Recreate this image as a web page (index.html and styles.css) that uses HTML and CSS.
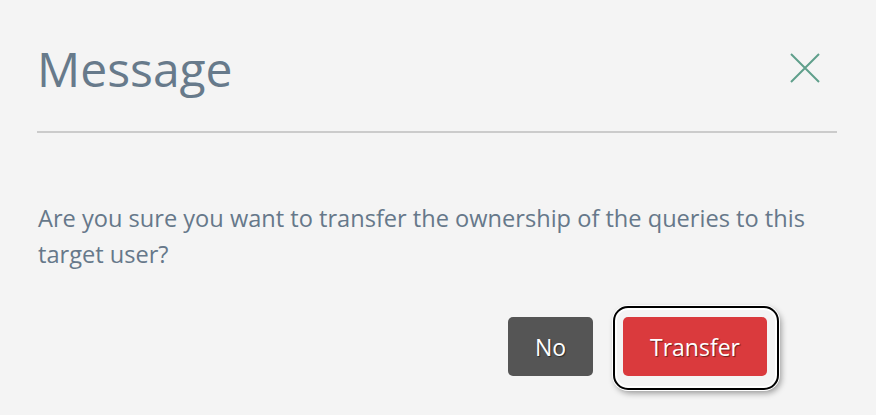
FILE: index.html
```html
<!DOCTYPE html>
<html>
<head>
  <title>Message</title>
  <link rel="stylesheet" href="styles.css">
</head>
<body>
  <div class="modal">
    <div class="modal-header">
      <h1 class="modal-title">Message</h1>
      <button class="close" aria-label="Close">
        <svg width="30" height="30" viewBox="0 0 30 30">
          <path d="M1 1 L29 29 M29 1 L1 29" stroke="#5f9f8b" stroke-width="2" fill="none"/>
        </svg>
      </button>
    </div>
    <div class="modal-body">
      <p>Are you sure you want to transfer the ownership of the queries to this target user?</p>
    </div>
    <div class="modal-footer">
      <button class="btn btn-no">No</button>
      <span class="focus-wrap">
        <button class="btn btn-transfer">Transfer</button>
      </span>
    </div>
  </div>
</body>
</html>
```

FILE: styles.css
```css
html, body {
  margin: 0;
  padding: 0;
  background-color: #f4f4f4;
  font-family: "Open Sans", "Liberation Sans", sans-serif;
}

body {
  min-height: 415px;
}

.modal {
  padding: 0 39px 38px 37px;
}

.modal-header {
  display: flex;
  align-items: center;
  justify-content: space-between;
  padding-top: 36px;
  padding-bottom: 30px;
  border-bottom: 2px solid #cbcbcb;
}

.modal-title {
  margin: 0;
  font-size: 48px;
  font-weight: 400;
  color: #677a8b;
  line-height: normal;
}

.close {
  background: none;
  border: none;
  padding: 0;
  margin-right: 17px;
  margin-top: -1px;
  width: 30px;
  height: 30px;
  cursor: pointer;
}

.close svg {
  display: block;
}

.modal-body {
  padding-top: 67px;
}

.modal-body p {
  margin: 0;
  font-size: 23.6px;
  line-height: 36px;
  color: #66788a;
  padding-left: 1px;
}

.modal-footer {
  display: flex;
  justify-content: flex-end;
  align-items: center;
  gap: 30px;
  padding-top: 45px;
  padding-right: 70px;
}

.focus-wrap {
  position: relative;
  display: block;
}

.focus-wrap::after {
  content: "";
  position: absolute;
  top: -11px;
  bottom: -14px;
  left: -10px;
  right: -12px;
  border: 2px solid #000;
  border-radius: 15px;
  box-shadow: 0 0 0 1px #fff, inset 0 0 0 2px #fff, 2px 3px 6px rgba(0, 0, 0, 0.4);
  pointer-events: none;
}

.btn {
  display: block;
  border: none;
  border-radius: 5px;
  height: 59px;
  padding: 0;
  font-family: "Open Sans", "Liberation Sans", sans-serif;
  font-size: 23px;
  font-weight: 500;
  color: #fff;
  text-shadow: 1px 1px 1px rgba(0, 0, 0, 0.5);
  cursor: pointer;
}

.btn-no {
  background-color: #555555;
  width: 85px;
}

.btn-transfer {
  background-color: #da3a3d;
  width: 144px;
}
```
